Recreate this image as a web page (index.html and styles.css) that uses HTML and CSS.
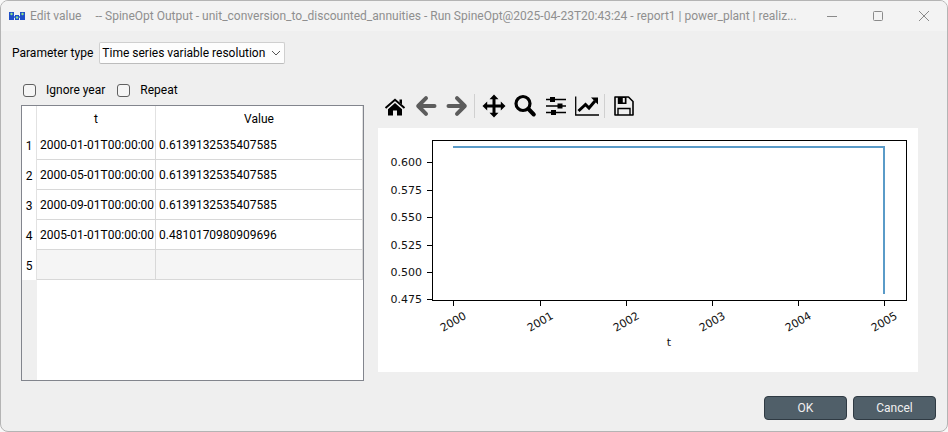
FILE: index.html
```html
<!DOCTYPE html>
<html lang="en">
<head>
<meta charset="utf-8">
<title>Edit value</title>
<link rel="stylesheet" href="styles.css">
</head>
<body>
<div class="window">
  <header class="titlebar">
    <svg class="app-icon" viewBox="0 0 16 10" aria-hidden="true">
      <path fill="#1f4fc8" d="M0 1h5v8H0zM11 1h5v8h-5zM6 4h4v5H6z"/>
      <path fill="#4a80e0" d="M5 5h1v2H5zM10 5h1v2h-1z"/>
      <circle cx="2.500" cy="3" r="1.200" fill="#8fe08a"/><circle cx="13.500" cy="3" r="1.200" fill="#8fe08a"/><circle cx="8" cy="6.500" r="1.200" fill="#8fe08a"/>
    </svg>
    <h1 class="title"><span class="name">Edit value</span><span class="source">-- SpineOpt Output - unit_conversion_to_discounted_annuities - Run SpineOpt@2025-04-23T20:43:24 - report1 | power_plant | realiz...</span></h1>
    <div class="controls">
      <button type="button" aria-label="Minimize"><svg viewBox="0 0 12 12"><path d="M1 6.500h10"/></svg></button>
      <button type="button" aria-label="Maximize"><svg viewBox="0 0 12 12"><rect x="1.500" y="1.500" width="9" height="9" rx="1"/></svg></button>
      <button type="button" aria-label="Close"><svg viewBox="0 0 12 12"><path d="M1 1l10 10M11 1L1 11"/></svg></button>
    </div>
  </header>

  <main class="content">
    <div class="type-row">
      <label for="ptype">Parameter type</label>
      <div class="select">
        <select id="ptype"><option>Time series variable resolution</option></select>
        <svg viewBox="0 0 10 6" aria-hidden="true"><path d="M1 1l4 4 4-4"/></svg>
      </div>
    </div>

    <div class="editor">
      <section class="data">
        <div class="options">
          <label><input type="checkbox">Ignore year</label>
          <label><input type="checkbox">Repeat</label>
        </div>
        <div class="table-frame">
          <table>
            <colgroup><col class="col-index"><col class="col-time"><col></colgroup>
            <thead><tr><th></th><th>t</th><th>Value</th></tr></thead>
            <tbody>
              <tr><th>1</th><td>2000-01-01T00:00:00</td><td>0.6139132535407585</td></tr>
              <tr><th>2</th><td>2000-05-01T00:00:00</td><td>0.6139132535407585</td></tr>
              <tr><th>3</th><td>2000-09-01T00:00:00</td><td>0.6139132535407585</td></tr>
              <tr><th>4</th><td>2005-01-01T00:00:00</td><td>0.4810170980909696</td></tr>
              <tr class="empty"><th>5</th><td></td><td></td></tr>
            </tbody>
          </table>
          <div class="gutter"></div>
        </div>
      </section>

      <section class="plot">
        <div class="toolbar">
          <button type="button" aria-label="Home"><svg viewBox="0 0 24 24"><path d="M12 9l7 6.200V21.500h-5v-5h-4v5H5v-6.300z"/><path d="M16.500 5.500H19v5l-2.500-2z"/><path d="M2.500 14L12 5.800l9.500 8.200" fill="none" stroke="#000" stroke-width="2"/></svg></button>
          <button type="button" aria-label="Back" disabled><svg viewBox="0 0 24 24"><path class="arrow" d="M20.500 12H5M12 4.200L4.200 12l7.800 7.800"/></svg></button>
          <button type="button" aria-label="Forward" disabled><svg viewBox="0 0 24 24"><path class="arrow" d="M3.500 12H19M12 4.200l7.800 7.800-7.800 7.800"/></svg></button>
          <span class="sep"></span>
          <button type="button" aria-label="Pan"><svg viewBox="0 0 24 24"><path d="M12 .5l4.500 4.700h-3v5.300h5.300v-3l4.700 4.500-4.700 4.500v-3h-5.300v5.300h3L12 23.500l-4.500-4.700h3v-5.300H5.200v3L.5 12l4.700-4.500v3h5.300V5.200h-3z"/></svg></button>
          <button type="button" aria-label="Zoom"><svg viewBox="0 0 24 24"><circle cx="10" cy="9.500" r="7" fill="none" stroke="#000" stroke-width="3.200"/><path d="M15.500 15l5.300 5.500" stroke="#000" stroke-width="4" stroke-linecap="round"/></svg></button>
          <button type="button" aria-label="Configure subplots"><svg viewBox="0 0 24 24"><path d="M2 5.500h20M2 12h20M2 18.500h20" stroke="#000" stroke-width="1.500"/><path d="M6 3h5v5H6zM13.500 9.500h5v5h-5zM7 16h5v5H7z"/></svg></button>
          <button type="button" aria-label="Edit axes"><svg viewBox="0 0 24 24"><path d="M.7 2.500V21H24" fill="none" stroke="#000" stroke-width="1.300"/><path d="M3.500 17l7-6.500 3.500 3.500 6-7" fill="none" stroke="#000" stroke-width="3"/><path d="M16 3.500h7v7z"/></svg></button>
          <span class="sep"></span>
          <button type="button" aria-label="Save"><svg viewBox="0 0 24 24"><path d="M3 3h13.500L21 7.500V21H3z" fill="none" stroke="#000" stroke-width="1.600" stroke-linejoin="round"/><path d="M5.800 3h8.700v7H5.800z"/><path d="M10.800 4h2v4.500h-2z" fill="#efefef"/><path d="M6 21v-6.500h12V21" fill="none" stroke="#000" stroke-width="1.400"/></svg></button>
        </div>
        <svg class="chart" viewBox="0 0 540 244" role="img" aria-label="Value over time">
          <rect class="axis" x="54.500" y="12.500" width="474" height="160"/>
          <path class="axis" d="M49 34.500h5M49 62.500h5M49 89.500h5M49 117.500h5M49 144.500h5M49 171.500h5M75.500 173v5M162.500 173v5M248.500 173v5M334.500 173v5M420.500 173v5M506.500 173v5"/>
          <path class="line" d="M75 19H506V166"/>
          <g text-anchor="end">
            <text x="44" y="38">0.600</text><text x="44" y="66">0.575</text><text x="44" y="93">0.550</text>
            <text x="44" y="121">0.525</text><text x="44" y="148">0.500</text><text x="44" y="175">0.475</text>
          </g>
          <g text-anchor="middle">
            <text transform="translate(77 197) rotate(-30)">2000</text>
            <text transform="translate(164 197) rotate(-30)">2001</text>
            <text transform="translate(250 197) rotate(-30)">2002</text>
            <text transform="translate(336 197) rotate(-30)">2003</text>
            <text transform="translate(422 197) rotate(-30)">2004</text>
            <text transform="translate(508 197) rotate(-30)">2005</text>
            <text x="291" y="218">t</text>
          </g>
        </svg>
      </section>
    </div>

    <footer class="actions">
      <button type="button">OK</button>
      <button type="button">Cancel</button>
    </footer>
  </main>
</div>
</body>
</html>
```
FILE: styles.css
```css
* { box-sizing: border-box; }
body {
  margin: 0;
  background: #f8f8f8;
  color: #000;
  font: 12px/16px Roboto, "Open Sans", sans-serif;
}
button, select, input { font: inherit; margin: 0; }
.window {
  display: flex;
  flex-direction: column;
  min-height: 100vh;
  border: 1px solid #b4b4b4;
  border-radius: 8px;
  background: #efefef;
  overflow: hidden;
}
.titlebar {
  display: flex;
  align-items: center;
  height: 30px;
  padding-left: 8px;
  background: #f3f3f3;
  color: #8f8f8f;
}
.app-icon { width: 16px; height: 10px; flex: none; }
.title {
  display: flex;
  flex: 1;
  gap: 14px;
  min-width: 0;
  margin: 0 0 0 5px;
  font-size: 12px;
  font-weight: 400;
  white-space: nowrap;
}
.source { overflow: hidden; text-overflow: ellipsis; }
.controls { display: flex; flex: none; }
.controls button {
  display: grid;
  place-items: center;
  width: 46px;
  height: 30px;
  padding: 0;
  border: 0;
  background: none;
}
.controls svg { width: 12px; height: 12px; fill: none; stroke: #8a8a8a; }

.content { display: flex; flex: 1; flex-direction: column; padding: 11px; }
.type-row { display: flex; align-items: center; gap: 6px; height: 22px; }
.select { position: relative; }
.select select {
  width: 186px;
  height: 22px;
  padding: 0 0 0 2px;
  appearance: none;
  border: 1px solid #cfcfcf;
  border-bottom-color: #bcbcbc;
  border-radius: 2px;
  background: #fdfdfd;
  color: #000;
}
.select svg {
  position: absolute;
  top: 8px;
  right: 4px;
  width: 10px;
  height: 6px;
  fill: none;
  stroke: #555;
  pointer-events: none;
}

.editor {
  display: grid;
  flex: 1;
  grid-template-columns: 343fr 540fr;
  gap: 14px;
  padding: 18px 18px 15px 9px;
}
.data { display: flex; flex-direction: column; min-width: 0; }
.options { display: flex; align-items: center; gap: 12px; height: 16px; margin-bottom: 7px; padding-left: 2px; }
.options label { display: flex; align-items: center; gap: 10px; }
.options input {
  width: 13px;
  height: 13px;
  appearance: none;
  border: 1px solid #606060;
  border-radius: 3px;
  background: #f5f5f5;
}
.table-frame { display: flex; flex: 1; flex-direction: column; border: 1px solid #82858d; background: #fff; }
table { width: 100%; table-layout: fixed; border-collapse: separate; border-spacing: 0; }
.col-index { width: 15px; }
.col-time { width: 119px; }
th { padding: 2px 0 0; font-weight: 400; text-align: center; border-right: 1px solid #e2e2e2; }
thead th { height: 24px; }
tbody th { height: 30px; }
td {
  padding: 0 3px;
  border-right: 1px solid #d8d8d8;
  border-bottom: 1px solid #d8d8d8;
  white-space: nowrap;
}
.empty td { background: #f5f5f5; }
.gutter { flex: 1; width: 15px; background: #efefef; }

.plot { min-width: 0; }
.toolbar { display: flex; align-items: center; height: 44px; margin-top: 2px; padding-left: 1px; }
.toolbar button {
  display: grid;
  place-items: center;
  width: 31px;
  height: 30px;
  padding: 0;
  border: 0;
  background: none;
}
.toolbar svg { width: 24px; height: 24px; }
.arrow { fill: none; stroke: #5c5c5c; stroke-width: 4; stroke-linecap: round; stroke-linejoin: round; }
.sep { width: 1px; height: 24px; margin: 0 3px 0 2px; background: #d0d0d0; }
.chart { display: block; width: 100%; background: #fff; }
.chart text { font: 11px "DejaVu Sans", sans-serif; fill: #111; }
.axis { fill: none; stroke: #000; }
.line { fill: none; stroke: #5a9bc8; stroke-width: 2; }

.actions { display: flex; justify-content: flex-end; gap: 6px; }
.actions button {
  width: 83px;
  height: 24px;
  padding: 0;
  border: 1px solid #2f3a43;
  border-radius: 4px;
  background: #505f69;
  color: #f0f0f0;
}
```
